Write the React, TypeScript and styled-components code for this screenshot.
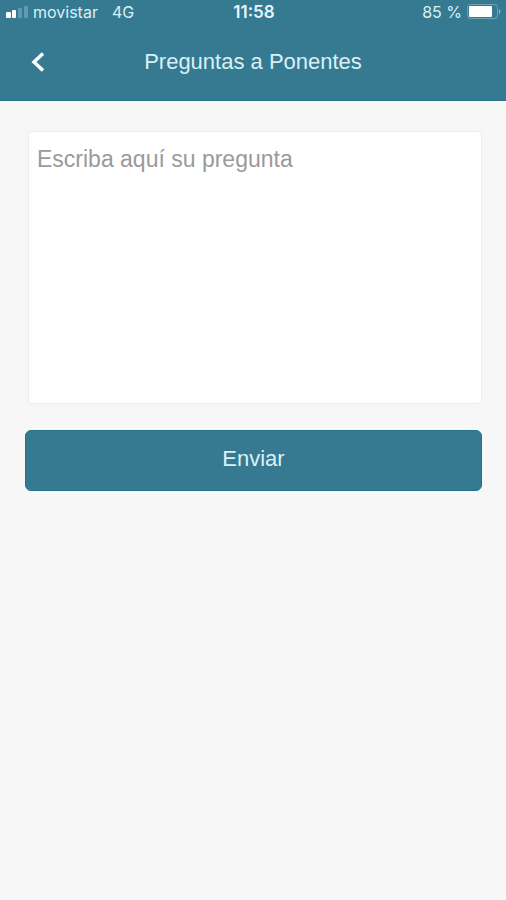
import React, { useState } from "react";
import styled, { createGlobalStyle } from "styled-components";

const teal = "#367a92";
const font = `"Liberation Sans", Arial, sans-serif`;

const GlobalStyle = createGlobalStyle`
  *, *::before, *::after { box-sizing: border-box; }
  body { margin: 0; background: #f7f7f7; font-family: ${font}; }
`;

const Page = styled.div`
  min-height: 100vh;
  background: #f7f7f7;
`;

const Top = styled.div`
  background: ${teal};
  border-bottom: 1px solid #26708a;
`;

const StatusBar = styled.div`
  display: grid;
  grid-template-columns: 1fr auto 1fr;
  align-items: center;
  height: 24px;
  padding: 0 4px 0 6px;
  color: #d9f0f6;
  font-family: Inter, ${font};
  font-size: 16px;
  line-height: 24px;
`;

const Carrier = styled.div`
  display: flex;
  align-items: center;
  gap: 5px;
`;

const Network = styled.span`
  margin-left: 9px;
`;

const Clock = styled.time`
  color: #e6f6fa;
  font-size: 17px;
  font-weight: 600;
`;

const Battery = styled.div`
  display: flex;
  align-items: center;
  justify-content: flex-end;
  gap: 5px;
`;

const NavBar = styled.header`
  display: grid;
  grid-template-columns: 48px 1fr 48px;
  align-items: center;
  height: 76px;
  padding: 0 14px;
`;

const BackButton = styled.button`
  display: flex;
  align-items: center;
  justify-content: center;
  height: 48px;
  padding: 0;
  border: 0;
  background: none;
  color: #fff;
  cursor: pointer;
`;

const Title = styled.h1`
  margin: 0;
  color: #d9f0f6;
  font-size: 22px;
  font-weight: 400;
  line-height: 28px;
  text-align: center;
`;

const Form = styled.form`
  display: flex;
  flex-direction: column;
  gap: 26px;
  padding: 30px 24px 0 25px;
`;

const Question = styled.textarea`
  display: block;
  height: 273px;
  margin-left: 3px;
  padding: 13px 8px;
  border: 1px solid #ececec;
  border-radius: 4px;
  background: #fff;
  color: #444;
  font-family: ${font};
  font-size: 23px;
  line-height: 28px;
  resize: none;
  outline-color: ${teal};

  &::placeholder {
    color: #9a9a9a;
    opacity: 1;
  }
`;

const SendButton = styled.button`
  height: 61px;
  padding: 0 0 4px;
  border: 1px solid #26708a;
  border-radius: 6px;
  background: ${teal};
  color: #d9f0f6;
  font-family: ${font};
  font-size: 22px;
  line-height: 28px;
  cursor: pointer;
`;

const SignalIcon = () => (
  <svg width="22" height="12" viewBox="0 0 22 12" aria-hidden="true">
    <rect x="0" y="6" width="5" height="6" rx="1" fill="#fff" />
    <rect x="6" y="4" width="4" height="8" rx="1" fill="#fff" />
    <rect x="12" y="2" width="4" height="10" rx="1" fill="#609aae" />
    <rect x="18" y="0" width="4" height="12" rx="1" fill="#609aae" />
  </svg>
);

const BatteryIcon = () => (
  <svg width="35" height="16" viewBox="0 0 35 16" aria-hidden="true">
    <rect x="0.5" y="0.5" width="30" height="14" rx="3" fill="none" stroke="#6ca3b5" />
    <rect x="2" y="2" width="23" height="11" rx="1" fill="#fff" />
    <path d="M32 5q3 2.500 0 5z" fill="#8fbac8" />
  </svg>
);

const BackIcon = () => (
  <svg width="16" height="22" viewBox="0 0 16 22" aria-hidden="true">
    <path d="M13 2.500 4 11l9 8.500" fill="none" stroke="currentColor" strokeWidth="3.500" />
  </svg>
);

export default function App() {
  const [question, setQuestion] = useState("");

  return (
    <Page>
      <GlobalStyle />
      <Top>
        <StatusBar>
          <Carrier>
            <SignalIcon />
            <span>movistar</span>
            <Network>4G</Network>
          </Carrier>
          <Clock>11:58</Clock>
          <Battery>
            <span>85 %</span>
            <BatteryIcon />
          </Battery>
        </StatusBar>
        <NavBar>
          <BackButton type="button" aria-label="Volver">
            <BackIcon />
          </BackButton>
          <Title>Preguntas a Ponentes</Title>
        </NavBar>
      </Top>
      <Form onSubmit={(event) => event.preventDefault()}>
        <Question
          aria-label="Escriba aquí su pregunta"
          placeholder="Escriba aquí su pregunta"
          value={question}
          onChange={(event) => setQuestion(event.target.value)}
        />
        <SendButton type="submit">Enviar</SendButton>
      </Form>
    </Page>
  );
}
